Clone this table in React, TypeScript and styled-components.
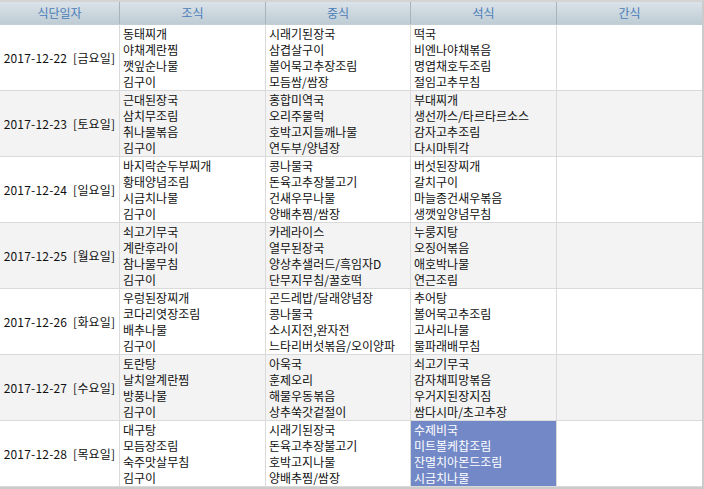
import React from 'react';
import styled, { createGlobalStyle } from 'styled-components';

const Global = createGlobalStyle`
  html, body { margin: 0; padding: 0; background: #ffffff; }
  body { font-family: "Noto Sans CJK KR", "Noto Sans", sans-serif; }
`;

const COLS = '120px 146px 145px 146px 145px';

const Frame = styled.div`
  width: 704px;
  height: 489px;
  box-sizing: border-box;
  border-top: 2px solid #d4d4d4;
  border-right: 2px solid #cbcbcb;
  border-bottom: 2px solid #cbcbcb;
  overflow: hidden;
  display: flex;
  flex-direction: column;
`;

const HeaderRow = styled.div`
  display: grid;
  grid-template-columns: ${COLS};
  height: 23px;
  box-sizing: border-box;
  border-bottom: 1px solid #c3cdd4;
  background: linear-gradient(to bottom, #dae3e9 0%, #c9d5dc 60%, #bfccd4 100%);
`;

const HeadCell = styled.div`
  box-sizing: border-box;
  border-right: 1px solid #a8b3bb;
  color: #4a7cb8;
  font-size: 12px;
  line-height: 22px;
  text-align: center;
  &:last-child { border-right: none; }
`;

const Row = styled.div<{ $alt: boolean }>`
  display: grid;
  grid-template-columns: ${COLS};
  height: 66px;
  box-sizing: border-box;
  border-bottom: 1px solid #dadada;
  background: ${(p) => (p.$alt ? '#f3f3f3' : '#ffffff')};
`;

const DateCell = styled.div`
  box-sizing: border-box;
  border-right: 1px solid #dadada;
  display: flex;
  align-items: center;
  justify-content: center;
  font-size: 12px;
  line-height: 16px;
  word-spacing: 3px;
  letter-spacing: 0.2px;
  color: #111;
  white-space: nowrap;
  overflow: hidden;
`;

const MenuCell = styled.div<{ $selected?: boolean }>`
  box-sizing: border-box;
  border-right: 1px solid #dadada;
  display: flex;
  flex-direction: column;
  justify-content: center;
  padding-left: 3px;
  font-size: 12px;
  line-height: 16px;
  white-space: nowrap;
  overflow: hidden;
  color: ${(p) => (p.$selected ? '#ffffff' : '#111111')};
  background: ${(p) => (p.$selected ? '#7389c7' : 'transparent')};
  &:last-child { border-right: none; }
`;

const Line = styled.span`
  display: block;
`;

type Day = {
  date: string;
  breakfast: string[];
  lunch: string[];
  dinner: string[];
  snack: string[];
};

const days: Day[] = [
  {
    date: '2017-12-22 [금요일]',
    breakfast: ['동태찌개', '야채계란찜', '깻잎순나물', '김구이'],
    lunch: ['시래기된장국', '삼겹살구이', '볼어묵고추장조림', '모듬쌈/쌈장'],
    dinner: ['떡국', '비엔나야채볶음', '명엽채호두조림', '절임고추무침'],
    snack: [],
  },
  {
    date: '2017-12-23 [토요일]',
    breakfast: ['근대된장국', '삼치무조림', '취나물볶음', '김구이'],
    lunch: ['홍합미역국', '오리주물럭', '호박고지들깨나물', '연두부/양념장'],
    dinner: ['부대찌개', '생선까스/타르타르소스', '감자고추조림', '다시마튀각'],
    snack: [],
  },
  {
    date: '2017-12-24 [일요일]',
    breakfast: ['바지락순두부찌개', '황태양념조림', '시금치나물', '김구이'],
    lunch: ['콩나물국', '돈육고추장불고기', '건새우무나물', '양배추찜/쌈장'],
    dinner: ['버섯된장찌개', '갈치구이', '마늘종건새우볶음', '생깻잎양념무침'],
    snack: [],
  },
  {
    date: '2017-12-25 [월요일]',
    breakfast: ['쇠고기무국', '계란후라이', '참나물무침', '김구이'],
    lunch: ['카레라이스', '열무된장국', '양상추샐러드/흑임자D', '단무지무침/꿀호떡'],
    dinner: ['누룽지탕', '오징어볶음', '애호박나물', '연근조림'],
    snack: [],
  },
  {
    date: '2017-12-26 [화요일]',
    breakfast: ['우렁된장찌개', '코다리엿장조림', '배추나물', '김구이'],
    lunch: ['곤드레밥/달래양념장', '콩나물국', '소시지전,완자전', '느타리버섯볶음/오이양파'],
    dinner: ['추어탕', '볼어묵고추조림', '고사리나물', '물파래배무침'],
    snack: [],
  },
  {
    date: '2017-12-27 [수요일]',
    breakfast: ['토란탕', '날치알계란찜', '방풍나물', '김구이'],
    lunch: ['아욱국', '훈제오리', '해물우동볶음', '상추쑥갓겉절이'],
    dinner: ['쇠고기무국', '감자채피망볶음', '우거지된장지짐', '쌈다시마/초고추장'],
    snack: [],
  },
  {
    date: '2017-12-28 [목요일]',
    breakfast: ['대구탕', '모듬장조림', '숙주맛살무침', '김구이'],
    lunch: ['시래기된장국', '돈육고추장불고기', '호박고지나물', '양배추찜/쌈장'],
    dinner: ['수제비국', '미트볼케찹조림', '잔멸치아몬드조림', '시금치나물'],
    snack: [],
  },
];

const headers = ['식단일자', '조식', '중식', '석식', '간식'];

const Menu: React.FC<{ items: string[]; selected?: boolean }> = ({ items, selected }) => (
  <MenuCell $selected={selected}>
    {items.map((it, i) => (
      <Line key={i}>{it}</Line>
    ))}
  </MenuCell>
);

export default function App() {
  return (
    <>
      <Global />
      <Frame>
        <HeaderRow>
          {headers.map((h) => (
            <HeadCell key={h}>{h}</HeadCell>
          ))}
        </HeaderRow>
        {days.map((d, i) => (
          <Row key={d.date} $alt={i % 2 === 1}>
            <DateCell>{d.date}</DateCell>
            <Menu items={d.breakfast} />
            <Menu items={d.lunch} />
            <Menu items={d.dinner} selected={i === days.length - 1} />
            <Menu items={d.snack} />
          </Row>
        ))}
      </Frame>
    </>
  );
}
